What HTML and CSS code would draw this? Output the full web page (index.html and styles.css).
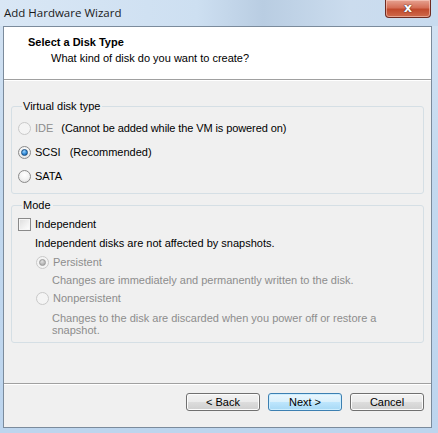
FILE: index.html
```html
<!DOCTYPE html>
<html lang="en">

<head>
    <meta charset="UTF-8">
    <title>Add Hardware Wizard</title>
    <link rel="stylesheet" href="styles.css">
</head>

<body>
    <div class="window">
        <div class="titlebar">
            <span class="title">Add Hardware Wizard</span>
            <span class="close"><span class="close-x">x</span></span>
        </div>

        <div class="client">
            <div class="header">
                <div class="header-title">Select a Disk Type</div>
                <div class="header-sub">What kind of disk do you want to create?</div>
            </div>

            <div class="content">
                <fieldset class="group">
                    <legend>Virtual disk type</legend>
                    <div class="row">
                        <span class="radio disabled"></span>
                        <span class="label disabled">IDE</span>
                        <span class="note note-ide">(Cannot be added while the VM is powered on)</span>
                    </div>
                    <div class="row">
                        <span class="radio checked"></span>
                        <span class="label">SCSI</span>
                        <span class="note note-scsi">(Recommended)</span>
                    </div>
                    <div class="row">
                        <span class="radio"></span>
                        <span class="label">SATA</span>
                    </div>
                </fieldset>

                <fieldset class="group mode">
                    <legend>Mode</legend>
                    <div class="row row-check">
                        <span class="checkbox"></span>
                        <span class="label">Independent</span>
                    </div>
                    <div class="desc">Independent disks are not affected by snapshots.</div>
                    <div class="row row-sub">
                        <span class="radio disabled checked"></span>
                        <span class="label disabled">Persistent</span>
                    </div>
                    <div class="hint">Changes are immediately and permanently written to the disk.</div>
                    <div class="row row-sub">
                        <span class="radio disabled"></span>
                        <span class="label disabled">Nonpersistent</span>
                    </div>
                    <div class="hint hint-wrap">Changes to the disk are discarded when you power off or restore a<br>snapshot.</div>
                </fieldset>
            </div>

            <div class="footer">
                <button class="btn">&lt; Back</button>
                <button class="btn default">Next &gt;</button>
                <button class="btn">Cancel</button>
            </div>
        </div>
    </div>
</body>

</html>
```

FILE: styles.css
```css
body {
    margin: 0;
    font-family: "Liberation Sans", Arial, sans-serif;
    font-size: 11px;
    color: #000;
}

.window {
    width: 438px;
    height: 433px;
    display: flex;
    flex-direction: column;
    background: linear-gradient(to bottom, #d4e3f3 0%, #c3d9ef 40%, #bdd5ee 100%);
    overflow: hidden;
}

.titlebar {
    height: 26px;
    display: flex;
    align-items: flex-start;
    padding-left: 4px;
    background: linear-gradient(to right, #d9e7f5 0%, #cddff1 45%, #b9cde2 60%, #cbdcee 80%, #c8dbef 100%);
}

.title {
    font-family: "Open Sans", "Noto Sans", sans-serif;
    font-size: 11.5px;
    color: #1a1a1a;
    margin-top: 5px;
}

.close {
    margin-left: auto;
    margin-right: 7px;
    width: 46px;
    height: 18px;
    box-sizing: border-box;
    border: 1px solid #6e2b22;
    border-top: none;
    border-radius: 0 0 4px 4px;
    background: linear-gradient(to bottom, #e6a291 0%, #d56f57 45%, #c14a2d 55%, #cf6a4c 100%);
    box-shadow: inset 0 0 0 1px rgba(255, 220, 210, 0.5);
    display: flex;
    justify-content: center;
    align-items: center;
}

.close-x {
    font-family: "DejaVu Sans", sans-serif;
    font-weight: bold;
    font-size: 13px;
    line-height: 12px;
    color: #fff;
    text-shadow: 0 0 1px #3a1a1a, 0 0 1px #3a1a1a;
    margin-top: -2px;
}

.client {
    margin-left: 3px;
    width: 429px;
    height: 402px;
    box-sizing: border-box;
    border: 1px solid #7b8b9c;
    background-color: #f0f0f0;
    display: flex;
    flex-direction: column;
}

.header {
    height: 53px;
    box-sizing: border-box;
    background-color: #fff;
    border-bottom: 1px solid #a0a0a0;
    padding: 9px 0 0 24px;
    line-height: 13px;
}

.header-title {
    font-weight: bold;
}

.header-sub {
    margin-top: 3px;
    padding-left: 23px;
}

.content {
    flex: 1;
    border-top: 1px solid #fff;
    border-bottom: 1px solid #a0a0a0;
    padding: 19px 7px 0 7px;
}

.group {
    margin: 0;
    padding: 3px 0 5px 6px;
    border: 1px solid #d5dfe5;
    border-radius: 3px;
    line-height: 13px;
}

.group legend {
    padding: 0 2px 0 1px;
    margin-left: 4px;
}

.group.mode {
    margin-top: 5px;
    padding-top: 3px;
    padding-bottom: 6px;
}

.row {
    height: 24px;
    display: flex;
    align-items: center;
}

.label {
    margin-left: 4px;
}

.note-ide {
    margin-left: 8px;
    letter-spacing: -0.1px;
}

.note-scsi {
    margin-left: 9px;
}

.disabled {
    color: #8d8d8d;
}

.radio {
    width: 13px;
    height: 13px;
    box-sizing: border-box;
    border-radius: 50%;
    border: 1px solid #8a8a8a;
    background: radial-gradient(circle at 50% 35%, #ffffff 0%, #f1f1f1 55%, #d8d8d8 100%);
    display: flex;
    justify-content: center;
    align-items: center;
}

.radio.checked::after {
    content: "";
    width: 5px;
    height: 5px;
    border-radius: 50%;
    border: 1px solid #1b4f80;
    background: radial-gradient(circle at 40% 30%, #9bd3ff 0%, #2a85d4 60%, #0f4f93 100%);
}

.radio.disabled {
    border-color: #c9c9c9;
    background: #f4f4f4;
}

.radio.disabled.checked::after {
    border-color: #9a9a9a;
    background: radial-gradient(circle at 40% 30%, #e0e0e0 0%, #b0b0b0 70%, #9a9a9a 100%);
}

.checkbox {
    width: 13px;
    height: 13px;
    box-sizing: border-box;
    border: 1px solid #8a8a8a;
    background: linear-gradient(135deg, #dcdcdc 0%, #f2f2f2 60%, #ffffff 100%);
    box-shadow: inset 0 0 0 1px #f6f6f6;
}

.row-check {
    height: 19px;
}

.desc {
    padding-left: 17px;
    height: 19px;
    line-height: 19px;
}

.row-sub {
    height: 18px;
    padding-left: 18px;
}

.hint {
    color: #8d8d8d;
    padding-left: 34px;
    line-height: 18px;
}

.hint-wrap {
    line-height: 12px;
    margin-top: 5px;
}

.footer {
    border-top: 1px solid #fff;
    flex: 0 0 34px;
    display: flex;
    justify-content: flex-end;
    align-items: flex-start;
    padding: 8px 7px 0 0;
    gap: 8px;
}

.btn {
    width: 74px;
    height: 18px;
    padding: 0;
    font-family: "Liberation Sans", Arial, sans-serif;
    font-size: 11px;
    color: #000;
    border: 1px solid #707070;
    border-radius: 3px;
    background: linear-gradient(to bottom, #f2f2f2 0%, #ebebeb 50%, #dddddd 50%, #cfcfcf 100%);
    box-shadow: inset 0 0 0 1px #fcfcfc;
}

.btn.default {
    border-color: #3c7fb1;
    background: linear-gradient(to bottom, #eaf6fd 0%, #d9f0fc 50%, #bee6fd 50%, #a7d9f5 100%);
    box-shadow: inset 0 0 0 1px #cdeeff;
}
```
